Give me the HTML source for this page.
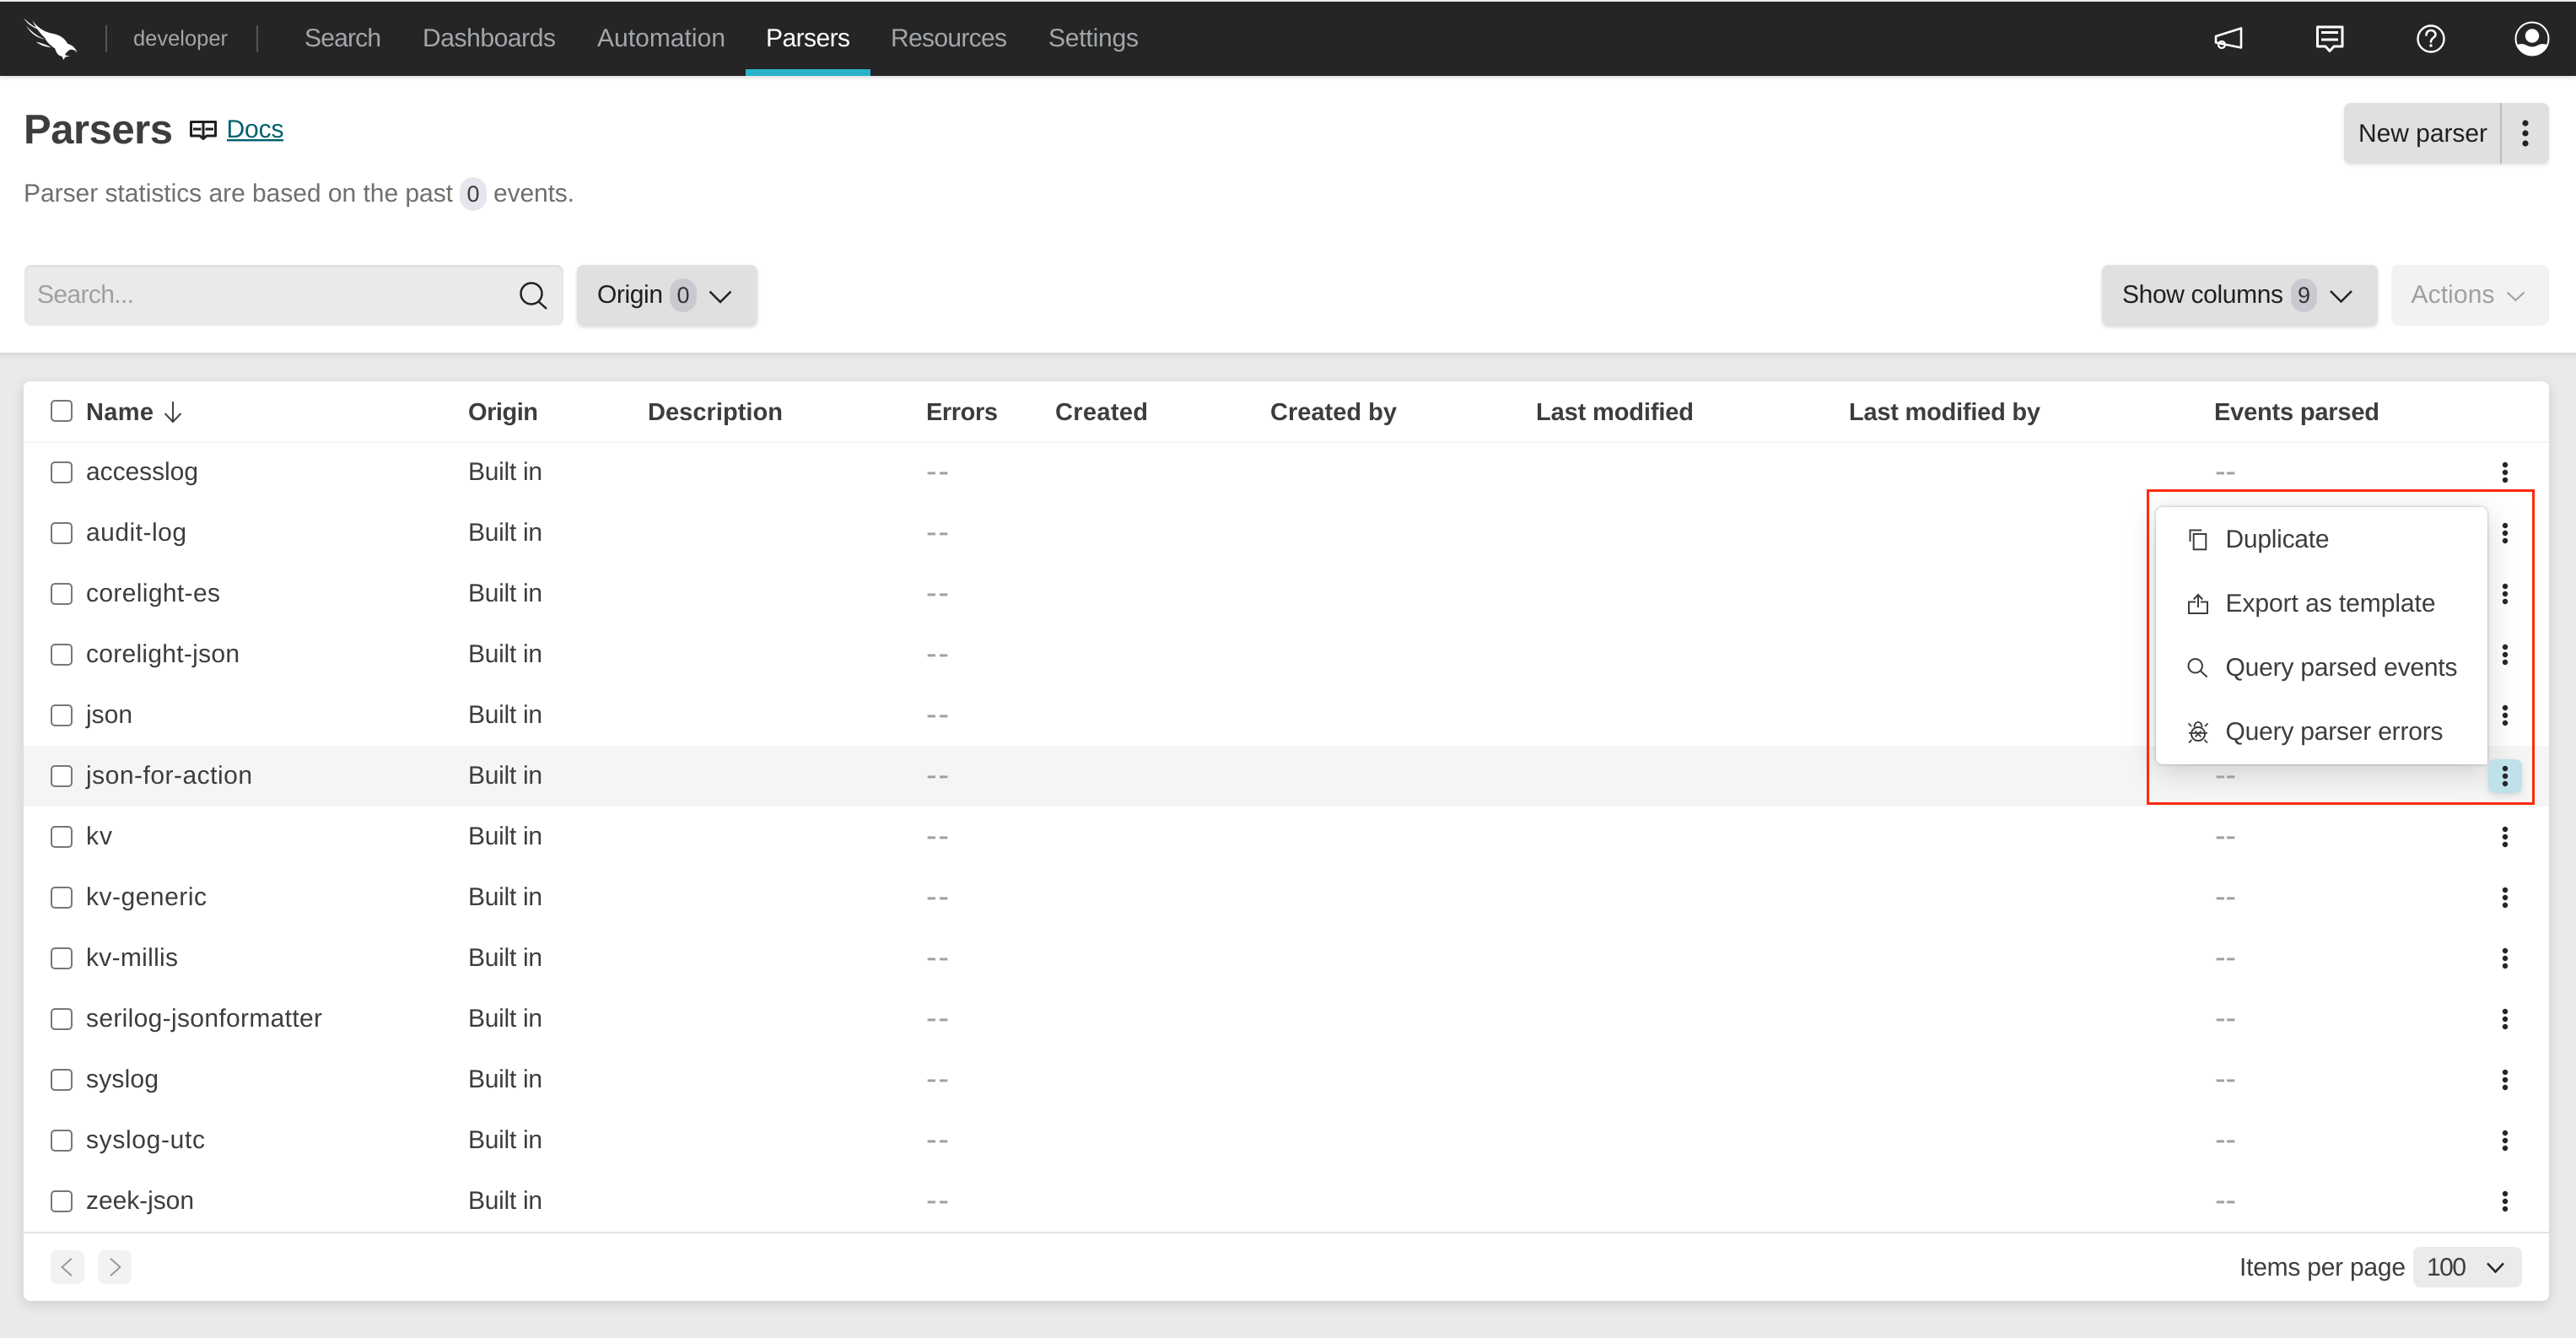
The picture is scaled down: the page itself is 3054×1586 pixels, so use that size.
<!DOCTYPE html>
<html lang="en"><head><meta charset="utf-8"><title>Parsers</title>
<style>
html,body{margin:0;padding:0;width:3054px;height:1586px;overflow:hidden;background:#eaeaea}
.b{position:absolute;box-sizing:border-box}
svg.o{position:absolute;left:0;top:0;z-index:10}
text{font-family:"Liberation Sans",sans-serif;font-size:30px;fill:#3d3d3d;text-rendering:geometricPrecision}
.n{fill:#a2a6aa}.w{fill:#fff}.h{font-weight:700;font-size:29px}.g{fill:#a0a0a0}.d{fill:#202020}
.dd{fill:#a0a0a0;font-size:38px;transform:translateY(2px)}
</style></head><body>
<div class="b" style="left:0;top:0;width:3054px;height:2px;background:#eee"></div>
<div class="b" style="left:0;top:90px;width:3054px;height:328px;background:#fff"></div>
<div class="b" style="left:0;top:418px;width:3054px;height:3px;background:#d9d9d9;box-shadow:0 2px 5px rgba(0,0,0,.07)"></div>
<div class="b" style="left:0;top:2px;width:3054px;height:88px;background:#252525;box-shadow:0 2px 5px rgba(0,0,0,.14)"></div>
<div class="b" style="left:884px;top:82px;width:148px;height:8px;background:#2ab2ca"></div>
<div class="b" style="left:125px;top:30px;width:2px;height:32px;background:#555"></div>
<div class="b" style="left:304px;top:30px;width:2px;height:32px;background:#555"></div>

<div class="b" style="left:545px;top:210px;width:32px;height:40px;border-radius:16px;background:#e6e7ee"></div>
<div class="b" style="left:2779px;top:122px;width:243px;height:72px;border-radius:8px;background:#e0e0e0;box-shadow:0 2px 4px rgba(0,0,0,.1)"></div>
<div class="b" style="left:2964px;top:122px;width:2px;height:72px;background:#bcbcbc"></div>
<div class="b" style="left:29px;top:314px;width:639px;height:72px;border-radius:8px;background:#eaeaea;box-shadow:inset 0 2px 3px rgba(0,0,0,.06)"></div>
<div class="b" style="left:684px;top:314px;width:214px;height:72px;border-radius:8px;background:#e0e0e0;box-shadow:0 2px 4px rgba(0,0,0,.14)"></div>
<div class="b" style="left:794px;top:330px;width:32px;height:40px;border-radius:16px;background:#c8cad0"></div>
<div class="b" style="left:2492px;top:314px;width:327px;height:72px;border-radius:8px;background:#e0e0e0;box-shadow:0 2px 4px rgba(0,0,0,.14)"></div>
<div class="b" style="left:2716px;top:330px;width:31px;height:40px;border-radius:16px;background:#c8cad0"></div>
<div class="b" style="left:2835px;top:314px;width:187px;height:72px;border-radius:8px;background:#f2f2f2"></div>

<div class="b" style="left:28px;top:452px;width:2994px;height:1090px;border-radius:8px;background:#fff;box-shadow:0 4px 16px rgba(0,0,0,.13)"></div>
<div class="b" style="left:28px;top:523px;width:2994px;height:2px;background:#f5f5f5"></div>
<div class="b" style="left:28px;top:884px;width:2994px;height:72px;background:#f5f5f5"></div>
<div class="b" style="left:28px;top:1460px;width:2994px;height:2px;background:#e2e2e2"></div>
<div class="b" style="left:60px;top:1482px;width:40px;height:40px;border-radius:8px;background:#f2f2f2"></div>
<div class="b" style="left:116px;top:1482px;width:40px;height:40px;border-radius:8px;background:#f2f2f2"></div>
<div class="b" style="left:2861px;top:1478px;width:129px;height:48px;border-radius:8px;background:#ebebeb"></div>

<div class="b" style="left:2555.5px;top:601px;width:393.5px;height:305px;border-radius:8px 8px 0 8px;background:#fff;box-shadow:0 8px 36px rgba(0,0,0,.17),0 0 3px rgba(0,0,0,.3)"></div>
<div class="b" style="left:2950px;top:900px;width:40px;height:40px;border-radius:8px;background:#bfe2ea;box-shadow:0 3px 8px rgba(0,0,0,.12)"></div>

<svg class="o" width="3054" height="1586" viewBox="0 0 3054 1586" xmlns="http://www.w3.org/2000/svg">
<defs>
<g id="k" fill="#262626"><circle cx="0" cy="-9" r="3.2"/><circle cx="0" cy="0" r="3.2"/><circle cx="0" cy="9" r="3.2"/></g>
<rect id="c" x="61" y="1" width="24" height="24" rx="4" fill="#fff" stroke="#777" stroke-width="2"/>
</defs>

<!-- logo -->
<g transform="translate(20 15) scale(.3333)" fill="#fff">
<path d="M24 19C40 35 60 50 88 62C62 57 38 42 24 19Z"/>
<path d="M34 47C50 66 72 84 100 95C72 90 48 74 34 47Z"/>
<path d="M68 104C88 108 105 114 122 124C102 122 84 116 68 104Z"/>
<path d="M55 27C70 50 95 68 125 74C150 78 170 90 180 110C195 115 210 125 214 143C208 133 198 130 188 132C180 138 172 145 172 151L188 155L172 158L166 168L160 155C150 155 140 145 136 128C120 116 106 106 100 90C84 76 66 52 55 27Z"/>
</g>

<text x="158" y="54" class="n" style="font-size:25.5px" textLength="112">developer</text>
<text x="361" y="55" class="n" textLength="91">Search</text>
<text x="501" y="55" class="n" textLength="158">Dashboards</text>
<text x="708" y="55" class="n" textLength="152">Automation</text>
<text x="908" y="55" class="w" textLength="100">Parsers</text>
<text x="1056" y="55" class="n" textLength="138">Resources</text>
<text x="1243" y="55" class="n" textLength="107">Settings</text>

<!-- top right icons -->
<g fill="none" stroke="#fff" stroke-width="2.6" stroke-linejoin="round">
<path d="M2627 43L2657 33.5V56.5L2627 50.5Z"/>
<circle cx="2634" cy="53" r="4" stroke-width="2.2"/>
<path d="M2747.5 32H2777V55H2767L2762 60.5L2757 55H2747.5Z" stroke-width="3"/>
<path d="M2752 38.5H2772M2752 47H2772" stroke-width="3"/>
<circle cx="2882" cy="46" r="15.5" stroke-width="2.4"/>
<path d="M2876.5 41.5C2876.5 38 2879 36 2882 36C2885 36 2887.5 38 2887.5 41C2887.5 44.5 2882 45 2882 49.5" stroke-width="2.6" stroke-linecap="round"/>
<circle cx="3002" cy="46" r="19.5" stroke-width="2"/>
</g>
<circle cx="2882" cy="54" r="1.7" fill="#fff"/>
<circle cx="3002" cy="42.5" r="8.2" fill="#fff"/>
<path d="M2984 53C2989 51.5 2993 52 2996 54C3000 56 3004 56 3008 54C3011 52 3015 51.5 3020 53C3017 60 3010 65.5 3002 65.5C2994 65.5 2987 60 2984 53Z" fill="#fff"/>

<!-- title -->
<text x="28" y="170" style="font-size:49px;font-weight:700" textLength="177">Parsers</text>
<g fill="none" stroke="#1f1f1f">
<path d="M226.5 144.5H255.5V161H245L241 164.5L237 161H226.5Z" stroke-width="3" stroke-linejoin="round"/>
<path d="M241 144V162" stroke-width="3"/>
<path d="M229 153H238.5M243.5 153H253" stroke-width="3"/>
</g>
<text x="268.5" y="163" style="fill:#00616f" textLength="68">Docs</text>
<rect x="269" y="165" width="67" height="2.4" fill="#00616f"/>

<text x="28" y="239" style="fill:#6f6f6f" textLength="509">Parser statistics are based on the past</text>
<text x="553.5" y="239" textLength="15" style="font-size:27px">0</text>
<text x="585" y="239" style="fill:#6f6f6f" textLength="96">events.</text>

<text x="2796" y="168" class="d" textLength="153">New parser</text>
<circle cx="2994" cy="146" r="3.6" fill="#222"/><circle cx="2994" cy="158" r="3.6" fill="#222"/><circle cx="2994" cy="170" r="3.6" fill="#222"/>

<!-- toolbar -->
<text x="44" y="359" class="g" textLength="115">Search...</text>
<g fill="none" stroke="#222" stroke-width="2.5">
<circle cx="630" cy="348" r="12.5"/><path d="M638.5 357.5L648 366"/>
<path d="M841.5 345.5L854 358L866.5 345.5"/>
<path d="M2763 345L2775.5 357.5L2788 345"/>
<path d="M2949 1497.5L2958.5 1507.5L2968 1497.5"/>
</g>
<text x="708" y="359" class="d" textLength="78">Origin</text>
<text x="802.5" y="359" style="font-size:27px;fill:#333" textLength="15">0</text>
<text x="2516" y="359" class="d" textLength="191">Show columns</text>
<text x="2724" y="359" style="font-size:27px;fill:#333" textLength="15">9</text>
<text x="2858.5" y="359" class="g" textLength="99">Actions</text>
<path d="M2972.5 346.5L2982.5 356L2992.5 346.5" fill="none" stroke="#a0a0a0" stroke-width="2"/>

<!-- table header -->
<use href="#c" y="474"/>
<text x="102" y="498" class="h" textLength="80">Name</text>
<path d="M205 476V499M195.5 490L205 500L214.5 490" fill="none" stroke="#444" stroke-width="2"/>
<text x="555" y="498" class="h" textLength="83">Origin</text>
<text x="768" y="498" class="h" textLength="160">Description</text>
<text x="1098" y="498" class="h" textLength="85">Errors</text>
<text x="1251" y="498" class="h" textLength="110">Created</text>
<text x="1506" y="498" class="h" textLength="150">Created by</text>
<text x="1821" y="498" class="h" textLength="187">Last modified</text>
<text x="2192" y="498" class="h" textLength="227">Last modified by</text>
<text x="2625" y="498" class="h" textLength="196">Events parsed</text>

<!-- rows -->
<use href="#c" y="547"/><text x="102" y="569" textLength="133">accesslog</text><text x="555" y="569" textLength="88">Built in</text><text x="1098" y="569" class="dd" textLength="27">--</text><text x="2626" y="569" class="dd" textLength="25">--</text><use href="#k" x="2970" y="560"/>
<use href="#c" y="619"/><text x="102" y="641" textLength="119">audit-log</text><text x="555" y="641" textLength="88">Built in</text><text x="1098" y="641" class="dd" textLength="27">--</text><use href="#k" x="2970" y="632"/>
<use href="#c" y="691"/><text x="102" y="713" textLength="159">corelight-es</text><text x="555" y="713" textLength="88">Built in</text><text x="1098" y="713" class="dd" textLength="27">--</text><use href="#k" x="2970" y="704"/>
<use href="#c" y="763"/><text x="102" y="785" textLength="182">corelight-json</text><text x="555" y="785" textLength="88">Built in</text><text x="1098" y="785" class="dd" textLength="27">--</text><use href="#k" x="2970" y="776"/>
<use href="#c" y="835"/><text x="102" y="857" textLength="55">json</text><text x="555" y="857" textLength="88">Built in</text><text x="1098" y="857" class="dd" textLength="27">--</text><use href="#k" x="2970" y="848"/>
<use href="#c" y="907"/><text x="102" y="929" textLength="197">json-for-action</text><text x="555" y="929" textLength="88">Built in</text><text x="1098" y="929" class="dd" textLength="27">--</text><text x="2626" y="929" class="dd" textLength="25">--</text><use href="#k" x="2970" y="920"/>
<use href="#c" y="979"/><text x="102" y="1001" textLength="31">kv</text><text x="555" y="1001" textLength="88">Built in</text><text x="1098" y="1001" class="dd" textLength="27">--</text><text x="2626" y="1001" class="dd" textLength="25">--</text><use href="#k" x="2970" y="992"/>
<use href="#c" y="1051"/><text x="102" y="1073" textLength="143">kv-generic</text><text x="555" y="1073" textLength="88">Built in</text><text x="1098" y="1073" class="dd" textLength="27">--</text><text x="2626" y="1073" class="dd" textLength="25">--</text><use href="#k" x="2970" y="1064"/>
<use href="#c" y="1123"/><text x="102" y="1145" textLength="109">kv-millis</text><text x="555" y="1145" textLength="88">Built in</text><text x="1098" y="1145" class="dd" textLength="27">--</text><text x="2626" y="1145" class="dd" textLength="25">--</text><use href="#k" x="2970" y="1136"/>
<use href="#c" y="1195"/><text x="102" y="1217" textLength="280">serilog-jsonformatter</text><text x="555" y="1217" textLength="88">Built in</text><text x="1098" y="1217" class="dd" textLength="27">--</text><text x="2626" y="1217" class="dd" textLength="25">--</text><use href="#k" x="2970" y="1208"/>
<use href="#c" y="1267"/><text x="102" y="1289" textLength="86">syslog</text><text x="555" y="1289" textLength="88">Built in</text><text x="1098" y="1289" class="dd" textLength="27">--</text><text x="2626" y="1289" class="dd" textLength="25">--</text><use href="#k" x="2970" y="1280"/>
<use href="#c" y="1339"/><text x="102" y="1361" textLength="141">syslog-utc</text><text x="555" y="1361" textLength="88">Built in</text><text x="1098" y="1361" class="dd" textLength="27">--</text><text x="2626" y="1361" class="dd" textLength="25">--</text><use href="#k" x="2970" y="1352"/>
<use href="#c" y="1411"/><text x="102" y="1433" textLength="128">zeek-json</text><text x="555" y="1433" textLength="88">Built in</text><text x="1098" y="1433" class="dd" textLength="27">--</text><text x="2626" y="1433" class="dd" textLength="25">--</text><use href="#k" x="2970" y="1424"/>

<!-- footer -->
<path d="M85 1491.7L73.5 1502L85 1512.3M131 1491.7L142.4 1502L131 1512.3" fill="none" stroke="#999" stroke-width="2"/>
<text x="2655" y="1512" textLength="197">Items per page</text>
<text x="2877" y="1512" textLength="47">100</text>

<!-- menu -->
<text x="2638.5" y="649" textLength="123">Duplicate</text>
<text x="2638.5" y="725" textLength="249">Export as template</text>
<text x="2638.5" y="801" textLength="275">Query parsed events</text>
<text x="2638.5" y="877" textLength="258">Query parser errors</text>
<g fill="none" stroke="#3d3d3d" stroke-width="2">
<rect x="2600.7" y="633" width="14.6" height="18.3"/>
<path d="M2596.5 642V628.5H2610"/>
<path d="M2603 713.5H2595V727H2617V713.5H2609"/>
<path d="M2606 720V705.5M2600.7 710.5L2606 705L2611.3 710.5"/>
<circle cx="2602.7" cy="789.3" r="8.2"/><path d="M2608.5 795L2616.7 802.5"/>
<circle cx="2606" cy="870" r="8"/>
<path d="M2601.5 862C2601.5 854 2610.5 854 2610.5 862M2595 869H2617M2598 861L2594.5 857.5M2614 861L2617.5 857.5M2598.5 877L2595 880.5M2613.5 877L2617 880.5M2602.5 866.5L2609.5 873.5M2609.5 866.5L2602.5 873.5" stroke-width="1.8"/>
</g>
<rect x="2546.5" y="581.5" width="457" height="371" fill="none" stroke="#ff2a0c" stroke-width="3"/>
</svg>
</body></html>
